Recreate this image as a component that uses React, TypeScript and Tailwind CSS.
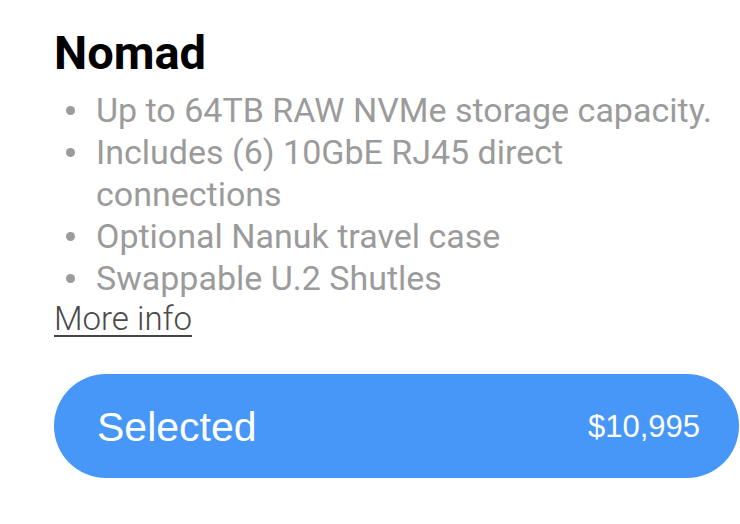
const features = [
  "Up to 64TB RAW NVMe storage capacity.",
  "Includes (6) 10GbE RJ45 direct connections",
  "Optional Nanuk travel case",
  "Swappable U.2 Shutles",
];

export default function App() {
  return (
    <div className="w-[740px] h-[524px] bg-white overflow-hidden pl-[54px] pt-[27px] font-['Roboto',sans-serif]">
      <h1 className="text-[47px] leading-[52px] font-bold text-black">Nomad</h1>

      {/* feature list */}
      <ul className="mt-[10px] text-[34px] leading-[42px] text-[#9b9b9b]">
        {features.map((f) => (
          <li key={f} className="flex">
            <span className="w-[42px] shrink-0 flex justify-start pl-[12px] pt-[17px]">
              <span className="block w-[9px] h-[9px] rounded-full bg-[#9b9b9b]" />
            </span>
            <span>{f}</span>
          </li>
        ))}
      </ul>

      <a
        href="#"
        className="inline-block mt-[2px] text-[33px] leading-[36px] font-light text-[#4a4a4a] underline decoration-2 underline-offset-[5px] decoration-[#444]"
      >
        More info
      </a>

      <button className="mt-[37px] w-[685px] h-[104px] rounded-full bg-[#4697f7] flex items-center justify-between pl-[43px] pr-[39px] pt-[3px] text-white font-['Liberation_Sans',Arial,sans-serif]">
        <span className="text-[41px]">Selected</span>
        <span className="text-[31px]">$10,995</span>
      </button>
    </div>
  );
}
